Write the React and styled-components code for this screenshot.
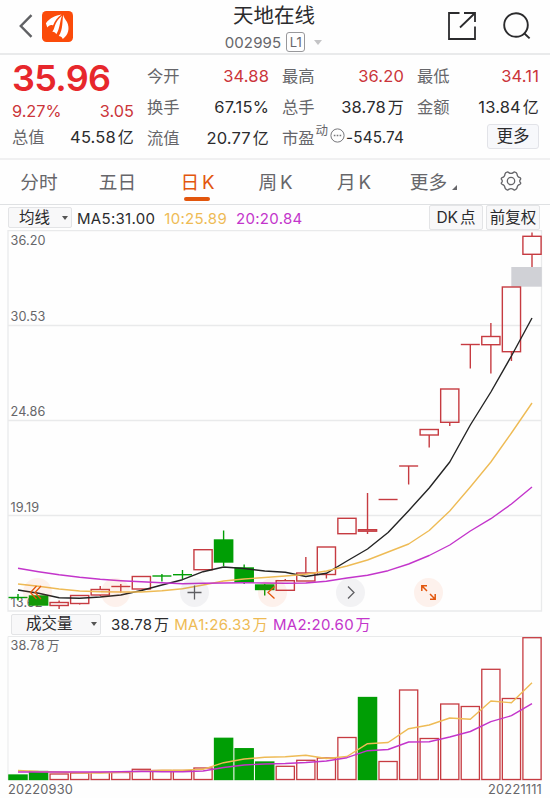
import styled, { createGlobalStyle } from "styled-components";

const red = "#cb353a";
const up = "#c63b41";
const down = "#009e05";
const orange = "#e2560d";
const yellow = "#eebb55";
const purple = "#c335cb";
const dark = "#2b2b2d";
const gray = "#66666a";
const line = "#e9eaeb";

const FIRST_X = 18;
const STEP = 20.56;
const cx = (i) => FIRST_X + STEP * i;

// type, top of body, bottom of body, top of wick, bottom of wick
const candles = [
  ["down", 597.5, 597.5, 594, 600.5],
  ["down", 596, 605, 596, 605],
  ["up", 602.5, 605.5, 600.5, 609],
  ["up", 595.5, 603.5, 595.5, 604.5],
  ["up", 589.5, 595, 586, 596],
  ["up", 586.5, 586.5, 584, 592.5],
  ["up", 576.5, 589, 576.5, 589],
  ["down", 576, 576, 574, 581.5],
  ["down", 574.7, 574.7, 570, 579],
  ["up", 549.7, 569.7, 549.7, 569.7],
  ["down", 540, 562, 530.5, 566],
  ["down", 568, 582, 564.5, 584],
  ["down", 585, 589.5, 584, 595.5],
  ["up", 580.7, 590.3, 579, 590.3],
  ["up", 573, 581, 557, 581],
  ["up", 547, 574.5, 547, 578.5],
  ["up", 518.3, 533.7, 518.3, 533.7],
  ["up", 529.7, 531.2, 493, 534],
  ["up", 499.5, 499.5, 499.5, 499.5],
  ["up", 466, 466, 466, 484.5],
  ["up", 429.5, 435, 429.5, 447.5],
  ["up", 389, 422.3, 389, 426],
  ["up", 344.5, 344.5, 344.5, 368.5],
  ["up", 336.5, 344.7, 323, 373.5],
  ["up", 287, 351.7, 287, 361],
  ["up", 236.3, 254.3, 232.5, 267],
];

const ma5 = [590, 593.3, 597.7, 598.3, 597, 595, 590.5, 585, 579.7, 571.7, 567, 568.5, 571, 572.3, 576.5, 573.3, 561, 549, 532.5, 510.7, 488, 462, 425, 392, 356, 318];
const ma10 = [584, 586.3, 589, 591, 591.7, 592, 592, 590.8, 588.7, 585, 581, 579, 577.5, 576, 574.3, 571, 566, 560, 552, 544, 530.5, 511, 487, 462, 433, 403];
const ma20 = [568.3, 571.7, 574.8, 577.3, 579.3, 580.7, 581.7, 582.7, 583.7, 583.3, 583, 582.7, 583, 583.3, 583, 581.3, 578, 575.3, 570.7, 564, 555.5, 545, 531, 518.7, 504, 487];

const volumes = [
  ["down", 775], ["down", 771.5], ["up", 774], ["up", 773], ["up", 772.5], ["up", 772.5],
  ["up", 769.3], ["up", 770.5], ["up", 770.5], ["up", 768], ["down", 738.3], ["down", 748.7],
  ["down", 762], ["up", 766.3], ["up", 760.3], ["up", 758], ["up", 737.5], ["down", 697.5],
  ["up", 761.5], ["up", 690], ["up", 738.5], ["up", 704], ["up", 706.5], ["up", 669.3],
  ["up", 698.5], ["up", 637.7],
];
const volMa1 = [770.5, 771.5, 772, 772.7, 773, 772.3, 771.3, 770.3, 770.3, 769.3, 762.7, 759, 757.3, 756.7, 755.3, 758.5, 756.5, 743.7, 742.5, 728.7, 725, 718, 719.3, 701, 702.7, 682.7];
const volMa2 = [772, 772, 772, 772, 772, 771.8, 771.3, 771.7, 771.7, 771, 767.5, 765, 764, 763.5, 762.5, 761, 757.7, 750.7, 749.5, 742, 741.7, 737, 731.5, 721.7, 715.7, 703.7];

const toPoints = (list) => list.map((y, i) => `${cx(i)},${y}`).join(" ");

const priceLabels = [
  ["36.20", 245],
  ["30.53", 321],
  ["24.86", 416],
  ["19.19", 512],
  ["13.62", 607],
];

const stats = [
  [
    { label: "今开", value: "34.88", hot: true },
    { label: "换手", value: "67.15%" },
    { label: "流值", value: "20.77", unit: "亿" },
  ],
  [
    { label: "最高", value: "36.20", hot: true },
    { label: "总手", value: "38.78", unit: "万" },
    { label: "市盈", value: "-545.74", dynamic: true },
  ],
  [
    { label: "最低", value: "34.11", hot: true },
    { label: "金额", value: "13.84", unit: "亿" },
    { more: true },
  ],
];

function Candle({ index, data }) {
  const [type, top, bottom, high, low] = data;
  const x = cx(index);
  const color = type === "up" ? up : down;
  if (bottom === top) {
    return (
      <g stroke={color} strokeWidth="1.4">
        <line x1={x - 9.5} x2={x + 9.5} y1={top} y2={top} />
        <line x1={x} x2={x} y1={high} y2={low} />
      </g>
    );
  }
  return (
    <g stroke={color} strokeWidth="1.4">
      <line x1={x} x2={x} y1={high} y2={top} />
      <line x1={x} x2={x} y1={bottom} y2={low} />
      <rect x={x - 9.1} y={top} width="18.2" height={bottom - top} fill={type === "up" ? "none" : color} />
    </g>
  );
}

function PriceChart() {
  return (
    <Chart viewBox="0 230 550 382" $height={382}>
      <g stroke={line} strokeWidth="1.3" fill="none">
        <path d="M8 230.5H541.5V611H8Z" />
        <path d="M8 325.5H541.5M8 420.5H541.5M8 515.5H541.5" />
      </g>
      {priceLabels.map(([text, y]) => (
        <AxisText key={text} x="10.5" y={y}>{text}</AxisText>
      ))}
      <rect x="511.3" y="267" width="30.5" height="19.7" fill="#d0d1d6" />
      {candles.map((el, index) => <Candle key={index} index={index} data={el} />)}
      <g fill="none" strokeWidth="1.4" strokeLinejoin="round">
        <polyline points={toPoints(ma5)} stroke="#242424" />
        <polyline points={toPoints(ma10)} stroke={yellow} />
        <polyline points={toPoints(ma20)} stroke={purple} />
      </g>
    </Chart>
  );
}

function VolumeChart() {
  return (
    <Chart viewBox="0 636 550 145" $height={145}>
      <path d="M8 780V636.5H541.5V780Z" stroke={line} fill="none" />
      <AxisText x="10.5" y="649.5">38.78<tspan dx="2">万</tspan></AxisText>
      {volumes.map(([type, top], index) => (
        <rect
          key={index}
          x={cx(index) - 9.1}
          y={top}
          width="18.2"
          height={779.5 - top}
          stroke={type === "up" ? up : down}
          strokeWidth="1.3"
          fill={type === "up" ? "none" : down}
        />
      ))}
      <g fill="none" strokeWidth="1.4" strokeLinejoin="round">
        <polyline points={toPoints(volMa1)} stroke={yellow} />
        <polyline points={toPoints(volMa2)} stroke={purple} />
      </g>
    </Chart>
  );
}

function Stat({ item }) {
  if (item.more) {
    return (
      <StatRow $end>
        <MoreButton>更多</MoreButton>
      </StatRow>
    );
  }
  return (
    <StatRow>
      <StatLabel>{item.label}</StatLabel>
      {item.dynamic && (
        <Dynamic>
          <sup>动</sup>
          <svg width="15" height="15" viewBox="0 0 15 15">
            <circle cx="7.5" cy="7.5" r="6.6" fill="none" stroke="#77777b" />
            <path d="M3.8 7.5h1.6M6.7 7.5h1.6M9.6 7.5h1.6" stroke="#77777b" strokeWidth="1.3" />
          </svg>
        </Dynamic>
      )}
      <StatValue $hot={item.hot} $small={item.dynamic}>
        {item.value}
        {item.unit && <Unit>{item.unit}</Unit>}
      </StatValue>
    </StatRow>
  );
}

export default function App() {
  return (
    <Page>
      <GlobalStyle />
      <Header>
        <HeaderSide>
          <svg width="14" height="24" viewBox="0 0 14 24" fill="none" stroke="#606164" strokeWidth="2.4">
            <path d="M12.5 1.2L1.8 12L12.5 22.8" />
          </svg>
          <Logo viewBox="0 0 31 31">
            <rect width="31" height="31" rx="4.5" fill="#fb4b0a" />
            <g fill="#fff">
              <path d="M3.9 12.3C8 6.8 13.5 4.3 19.5 3.5C15.5 6.5 12.8 9.8 11 14.5C8.8 13.5 6.8 14.3 5.3 16.6Z" />
              <path d="M20.1 4.6C16.5 8 14 11.3 12.7 15.2C12.2 17.5 11.5 19 10.3 20.8C12.3 20.6 13.5 21.5 14.3 23.3C18 17.5 17.7 10.5 20.1 4.600Z" />
              <path d="M21.2 3.8C20 10.5 21.3 18.3 16.8 25C18.500 25 19.800 25.800 20.800 28C26.500 24 28 17 25 11C23.500 8.500 21.700 6.500 21.200 3.800Z" />
            </g>
          </Logo>
        </HeaderSide>
        <Title>
          <h1>天地在线</h1>
          <Code>
            <span>002995</span>
            <Level>L1</Level>
            <Caret $color="#c4c4c6" $size={4} />
          </Code>
        </Title>
        <HeaderActions>
          <svg width="28" height="28" viewBox="0 0 28 28" fill="none" stroke={dark} strokeWidth="1.8">
            <path d="M11.5 1H1V27H27V14.5M16 1H27V10M27 1L12 15.5" />
          </svg>
          <svg width="28" height="28" viewBox="0 0 28 28" fill="none" stroke={dark} strokeWidth="1.9">
            <circle cx="13" cy="13" r="11.8" />
            <path d="M21.2 21.2L26.6 26.4" />
          </svg>
        </HeaderActions>
      </Header>

      <Quote>
        <PriceColumn>
          <Price>35.96</Price>
          <Change>
            <span>9.27%</span>
            <span>3.05</span>
          </Change>
          <Stat item={{ label: "总值", value: "45.58", unit: "亿" }} />
        </PriceColumn>
        {stats.map((column, index) => (
          <StatColumn key={index}>
            {column.map((el) => <Stat key={el.label || "more"} item={el} />)}
          </StatColumn>
        ))}
      </Quote>

      <Tabs>
        <Tab $width={78}>分时</Tab>
        <Tab $width={79}>五日</Tab>
        <Tab $width={81} $active>日<b>K</b></Tab>
        <Tab $width={75}>周<b>K</b></Tab>
        <Tab $width={82}>月<b>K</b></Tab>
        <Tab $width={73}>
          更多
          <Corner />
        </Tab>
        <Tab $width={86}>
          <svg width="22" height="20" viewBox="0 0 22 20" fill="none" stroke={gray} strokeWidth="1.3" strokeLinejoin="round">
            <path d="M7 1.2Q8 .7 8.7 1.6Q11 3.2 13.3 1.6Q14 .7 15 1.2Q16.6 1.7 17 3Q17.2 6 19.8 6.7Q21 7 20.6 8.2Q18.8 10 20.6 11.8Q21 13 19.8 13.3Q17.2 14 17 17Q16.6 18.3 15 18.8Q14 19.3 13.3 18.4Q11 16.8 8.7 18.4Q8 19.3 7 18.8Q5.4 18.3 5 17Q4.8 14 2.2 13.3Q1 13 1.4 11.8Q3.2 10 1.4 8.2Q1 7 2.2 6.7Q4.8 6 5 3Q5.4 1.7 7 1.2Z" />
            <circle cx="11" cy="10" r="3.7" />
          </svg>
        </Tab>
      </Tabs>

      <Toolbar $height={25}>
        <Select $width={64}>
          均线
          <Caret $color="#555" $size={3} />
        </Select>
        <Legend $left={5} $color={dark}>MA5:31.00</Legend>
        <Legend $left={9} $color={yellow}>10:25.89</Legend>
        <Legend $left={9} $color={purple}>20:20.84</Legend>
        <ToolButtons>
          <ToolButton>DK<i>点</i></ToolButton>
          <ToolButton>前复权</ToolButton>
        </ToolButtons>
      </Toolbar>

      <ChartArea>
        <PriceChart />
        <Controls>
          <Control $warm>
            <path d="M13.5 8L7.5 14.5L13.5 21M18 8L12 14.5L18 21" stroke={orange} />
          </Control>
          <Control $warm />
          <Control>
            <path d="M14.5 7.5V21.5M7.5 14.5H21.5" stroke="#5f5f63" />
          </Control>
          <Control $warm>
            <path d="M16.5 8.5L10 14.5L16.5 20.5" stroke={orange} />
          </Control>
          <Control>
            <path d="M12 8.5L18 14.5L12 20.5" stroke="#5f5f63" />
          </Control>
          <Control $warm>
            <path d="M7.8 13V7.8H13M7.8 7.8L13 13M16 16L21.2 21.2M21.2 16V21.2H16" stroke={orange} strokeWidth="1.5" />
          </Control>
        </Controls>
      </ChartArea>

      <Toolbar $height={24}>
        <Select $width={90} $left={3} $inset={14}>
          成交量
          <Caret $color="#555" $size={3} />
        </Select>
        <Legend $left={10} $color={dark}>38.78<i>万</i></Legend>
        <Legend $left={5} $color={yellow}>MA1:26.33<i>万</i></Legend>
        <Legend $left={5} $color={purple}>MA2:20.60<i>万</i></Legend>
      </Toolbar>
      <VolumeChart />
      <Dates>
        <span>20220930</span>
        <span>20221111</span>
      </Dates>
    </Page>
  );
}

const GlobalStyle = createGlobalStyle`
  * {
    box-sizing: border-box;
  }

  body {
    margin: 0;
    background-color: #fefefe;
  }

  i, b {
    font-style: normal;
    font-weight: 400;
  }
`;

const Page = styled.div`
  width: 550px;
  height: 798px;
  overflow: hidden;
  background-color: #fefefe;
  color: ${dark};
  font-family: Inter, "Noto Sans CJK SC", sans-serif;
`;

const Header = styled.header`
  height: 55px;
  display: flex;
  justify-content: space-between;
  border-bottom: 2px solid ${line};
  padding: 0 19px;
`;

const HeaderSide = styled.div`
  width: 100px;
  height: 52px;
  display: flex;
  align-items: center;
  gap: 9px;
`;

const Logo = styled.svg`
  width: 31px;
  height: 31px;
`;

const Title = styled.div`
  display: flex;
  flex-direction: column;
  align-items: center;
  margin-right: 7px;

  h1 {
    margin: 4px 0 0 5px;
    font-size: 20.5px;
    line-height: 24px;
    font-weight: 400;
  }
`;

const Code = styled.div`
  display: flex;
  align-items: center;
  height: 20px;
  margin: 4px 0 0 4px;
  font-size: 15px;
  letter-spacing: 0.15px;
  color: ${gray};
  gap: 5px;
`;

const Level = styled.span`
  width: 19px;
  height: 20px;
  border: 1px solid #98989b;
  border-radius: 3px;
  font-size: 13px;
  line-height: 18px;
  text-align: center;
`;

const Caret = styled.span`
  border: ${({ $size }) => $size}px solid transparent;
  border-top: ${({ $size }) => $size + 1.5}px solid ${({ $color }) => $color};
  border-bottom: none;
  margin-left: 4px;
`;

const HeaderActions = styled.div`
  width: 100px;
  height: 52px;
  display: flex;
  align-items: center;
  justify-content: flex-end;
  gap: 27px;
`;

const Quote = styled.section`
  height: 105px;
  display: grid;
  grid-template-columns: repeat(4, 122px);
  column-gap: 13px;
  padding: 6px 11px 0 12px;
  border-bottom: 2px solid #f0f0f1;
`;

const PriceColumn = styled.div`
  display: flex;
  flex-direction: column;
`;

const Price = styled.div`
  height: 34px;
  font-size: 36px;
  line-height: 34px;
  font-weight: 600;
  letter-spacing: -0.7px;
  color: #e7272c;
`;

const Change = styled.div`
  height: 27px;
  display: flex;
  justify-content: space-between;
  align-items: flex-end;
  padding-bottom: 1px;
  font-size: 16.3px;
  line-height: 20px;
  color: ${red};
`;

const StatColumn = styled.div`
  display: flex;
  flex-direction: column;
`;

const StatRow = styled.div`
  height: 30.7px;
  display: flex;
  align-items: center;
  justify-content: ${({ $end }) => ($end ? "flex-end" : "space-between")};
  line-height: 20px;
`;

const StatLabel = styled.span`
  font-size: 16.3px;
  color: ${gray};
`;

const StatValue = styled.span`
  display: flex;
  font-size: ${({ $small }) => ($small ? 15.3 : 16.5)}px;
  letter-spacing: 0.15px;
  color: ${({ $hot }) => ($hot ? red : dark)};
`;

const Unit = styled.span`
  margin-left: 2px;
  font-size: 16px;
`;

const Dynamic = styled.span`
  display: flex;
  align-items: center;
  gap: 2px;
  color: ${gray};

  sup {
    font-size: 12.5px;
    line-height: 14px;
    margin-top: -14px;
  }

  svg {
    margin-top: -5px;
  }
`;

const MoreButton = styled.button`
  width: 52px;
  height: 25px;
  margin-top: -3px;
  padding: 0;
  border: 1px solid #e2e3e8;
  border-radius: 3px;
  background-color: #f7f8fb;
  color: ${dark};
  font-family: inherit;
  font-size: 16.5px;
  line-height: 22px;
`;

const Tabs = styled.nav`
  height: 45px;
  display: flex;
  border-bottom: 1px solid #dfe1e3;
`;

const Tab = styled.div`
  position: relative;
  flex-shrink: 0;
  width: ${({ $width }) => $width}px;
  padding-bottom: 3px;
  display: flex;
  align-items: center;
  justify-content: center;
  gap: 3px;
  font-size: 18.7px;
  color: ${({ $active }) => ($active ? orange : gray)};

  &::after {
    content: "";
    display: ${({ $active }) => ($active ? "block" : "none")};
    position: absolute;
    bottom: 3px;
    left: 27px;
    width: 26px;
    height: 4px;
    border-radius: 2px;
    background-color: ${orange};
  }

  b {
    margin-top: 3px;
  }
`;

const Corner = styled.span`
  align-self: flex-end;
  margin: 0 -4px 11px 2px;
  border-left: 5px solid transparent;
  border-bottom: 5px solid ${gray};
`;

const Toolbar = styled.div`
  height: ${({ $height }) => $height}px;
  display: flex;
  align-items: center;
  padding: 0 10px 0 8px;
`;

const Select = styled.div`
  width: ${({ $width }) => $width}px;
  height: 21px;
  margin-left: ${({ $left }) => $left || 0}px;
  padding: 0 3px 0 ${({ $inset }) => $inset || 10}px;
  display: flex;
  align-items: center;
  justify-content: space-between;
  border: 1px solid #e3e4e6;
  border-radius: 2px;
  background-color: #f8f8f9;
  font-size: 15.5px;
  line-height: 18px;
`;

const Legend = styled.span`
  margin: 2px 0 0 ${({ $left }) => $left}px;
  font-size: 15px;
  line-height: 20px;
  letter-spacing: 0.3px;
  color: ${({ $color }) => $color};

  i {
    margin-left: 1.5px;
  }
`;

const ToolButtons = styled.div`
  margin-left: auto;
  display: flex;
  gap: 3px;
`;

const ToolButton = styled.div`
  width: 54px;
  height: 25px;
  border: 1px solid #e3e4e6;
  border-radius: 2px;
  background-color: #f8f8f9;
  font-size: 15.5px;
  line-height: 23px;
  text-align: center;
  white-space: nowrap;

  i {
    margin-left: 2px;
  }
`;

const Chart = styled.svg`
  display: block;
  width: 550px;
  height: ${({ $height }) => $height}px;
`;

const AxisText = styled.text`
  font-size: 12.7px;
  letter-spacing: 0.1px;
  fill: ${gray};
`;

const ChartArea = styled.div`
  position: relative;
`;

const Controls = styled.div`
  position: absolute;
  left: 23px;
  bottom: 5px;
  display: flex;
  gap: 49.3px;
`;

const Control = styled.svg.attrs({ viewBox: "0 0 29 29" })`
  width: 29px;
  height: 29px;
  border-radius: 50%;
  background-color: ${({ $warm }) => ($warm ? "rgba(240, 90, 30, 0.08)" : "rgba(90, 90, 110, 0.07)")};
  fill: none;
  stroke-width: 1.3px;
`;

const Dates = styled.div`
  display: flex;
  justify-content: space-between;
  padding: 0 8px;
  font-size: 12.8px;
  line-height: 18px;
  letter-spacing: 0.2px;
  color: ${gray};
`;
